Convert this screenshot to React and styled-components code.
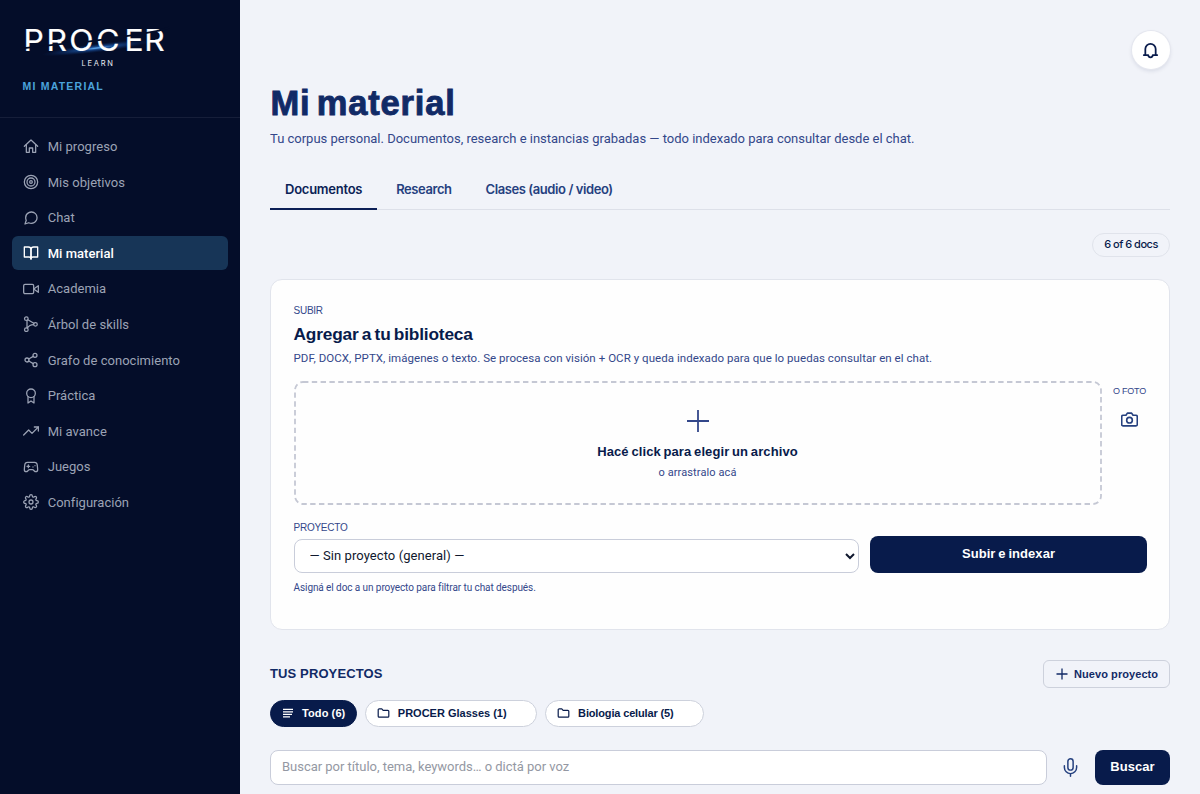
import styled, { createGlobalStyle } from "styled-components";
import { FiTarget, FiMessageCircle, FiBookOpen, FiVideo, FiShare2, FiTrendingUp, FiSettings, FiCamera } from "react-icons/fi";
import { Gamepad2, Mic } from "lucide-react";

const GlobalStyle = createGlobalStyle`
    *{
        box-sizing: border-box;
    }
    body{
        margin: 0;
        overflow: hidden;
        background-color: #f1f3f9;
        color: #081b4b;
        font-family: Roboto, "Noto Sans", sans-serif;
        font-size: 13px;
    }
    h1, h2, h3, p{
        margin: 0;
    }
    button, input, select{
        font-family: inherit;
        margin: 0;
    }
`

const heading = `"Liberation Sans", Arial, sans-serif`
const ui = `Inter, "Liberation Sans", sans-serif`

const Layout = styled.div`
    display: grid;
    grid-template-columns: 240px minmax(0, 1fr);
    height: 794px;
`

/* sidebar */
const Sidebar = styled.aside`
    background-color: #040d29;
`

const Brand = styled.div`
    display: flex;
    flex-direction: column;
    height: 118px;
    padding-top: 20px;
    border-bottom: 1px solid #161e39;
`

const Logo = styled.svg`
    display: block;
    width: 190px;
    height: 50px;
`

const Section = styled.span`
    margin: 9px 0 0 22.5px;
    color: #4ba3dc;
    font: 700 10.5px/14px ${heading};
    letter-spacing: 1.22px;
`

const Nav = styled.nav`
    display: flex;
    flex-direction: column;
    gap: 2px;
    padding: 11.7px 12px 0 11.5px;
`

const NavItem = styled.a`
    display: flex;
    align-items: center;
    gap: 8.7px;
    height: 33.6px;
    padding-left: 11.5px;
    border-radius: 6px;
    color: ${props => props.$active ? '#fff' : '#9ca3b5'};
    background-color: ${props => props.$active ? '#173557' : 'transparent'};
    font-weight: ${props => props.$active ? 500 : 400};
    letter-spacing: .03px;

    svg{
        flex: none;
        width: 16px;
        height: 16px;
        stroke-width: ${props => props.$active ? 2 : 1.9};
    }
`

/* content */
const Main = styled.main`
    display: flex;
    flex-direction: column;
    padding: 31px 30px 0;
`

const Bell = styled.button`
    display: grid;
    place-items: center;
    align-self: flex-end;
    width: 38px;
    height: 38px;
    padding: 0 1px 0 0;
    border: 0;
    border-radius: 50%;
    color: #0a1c4c;
    background-color: #fff;
    box-shadow: 0 0 0 1px #e5e7ef, 0 2px 4px rgba(10, 28, 76, .12);
`

const Title = styled.h1`
    margin-top: 15px;
    padding-left: .5px;
    color: #112a66;
    font: 700 34.5px/38px ${heading};
    letter-spacing: .8px;
    word-spacing: -4px;
    -webkit-text-stroke: .9px #112a66;
`

const Subtitle = styled.p`
    margin-top: 7px;
    color: #33478a;
    line-height: 20px;
    letter-spacing: -.01px;
`

const Tabs = styled.div`
    display: flex;
    gap: 4px;
    height: 42px;
    margin-top: 19px;
    border-bottom: 1px solid #dde0e9;
`

const Tab = styled.button`
    height: 42px;
    padding: 1px 15px 0;
    border: 0;
    border-bottom: 2px solid ${props => props.$active ? '#0c1f56' : 'transparent'};
    color: ${props => props.$active ? '#0c1f56' : '#25407f'};
    background: none;
    font: 600 13px/16px ${ui};
    letter-spacing: ${props => props.$spacing};
`

const DocCount = styled.span`
    align-self: flex-end;
    width: 78px;
    height: 24px;
    margin-top: 23px;
    border: 1px solid #e0e3eb;
    border-radius: 12px;
    font: 500 11px/21px ${ui};
    letter-spacing: -.5px;
    text-align: center;
`

const Card = styled.section`
    height: 351px;
    margin-top: 22px;
    padding: 23.5px 22px 0 22.5px;
    border: 1px solid #e1e4ec;
    border-radius: 12px;
    background-color: #fefefe;
`

const Label = styled.div`
    color: #33478a;
    font: 400 10px/14px ${heading};
    letter-spacing: -.25px;
`

const CardTitle = styled.h2`
    margin-top: 4.5px;
    color: #081b4b;
    font: 700 17.3px/24px ${heading};
    letter-spacing: -.18px;
    word-spacing: -1.3px;
`

const CardText = styled.p`
    margin-top: 3px;
    color: #33478a;
    font-size: 11.5px;
    line-height: 18px;
    letter-spacing: .05px;
`

const UploadRow = styled.div`
    display: grid;
    grid-template-columns: 808px 34px;
    gap: 11px;
    margin-top: 14px;
`

const DropZone = styled.div`
    display: flex;
    flex-direction: column;
    align-items: center;
    position: relative;
    height: 124px;
    padding-top: 28px;
    color: #33478a;
`

const DashedFrame = styled.svg`
    position: absolute;
    inset: 0;
    width: 100%;
    height: 100%;
`

const DropTitle = styled.strong`
    margin-top: 10px;
    color: #081b4b;
    font: 700 13px/18px ${heading};
    letter-spacing: .1px;
    word-spacing: -1px;
`

const DropHint = styled.span`
    margin-top: 3px;
    font-size: 11px;
    line-height: 18px;
    letter-spacing: .1px;
`

const Photo = styled.div`
    display: flex;
    flex-direction: column;
    align-items: center;
    gap: 13px;
    padding-top: 3px;
    color: #25407f;

    svg{
        stroke-width: 2.3;
    }
`

const PhotoLabel = styled(Label)`
    font-size: 9px;
    letter-spacing: -.25px;
    white-space: nowrap;
`

const ProjectRow = styled.div`
    display: grid;
    grid-template-columns: 565px 277px;
    gap: 11.5px;
    align-items: end;
    margin-top: 15.5px;
`

const Select = styled.select`
    display: block;
    width: 100%;
    height: 34.5px;
    margin-top: 4px;
    padding: 0 0 0 11px;
    border: 1px solid #c9cdda;
    border-radius: 8px;
    color: #10182e;
    background-color: #fff;
    font-size: 13px;
    letter-spacing: .07px;
`

const PrimaryButton = styled.button`
    width: ${props => props.$width};
    height: ${props => props.$height};
    padding: 0 0 1px;
    border: 0;
    border-radius: 8px;
    color: #fff;
    background-color: #081b4b;
    font: 700 13px/16px ${heading};
    letter-spacing: .05px;
    word-spacing: -.8px;
`

const Help = styled.p`
    margin-top: 8px;
    color: #33478a;
    font-size: 10px;
    line-height: 14px;
    letter-spacing: -.08px;
`

const ProjectsHead = styled.div`
    display: flex;
    align-items: center;
    justify-content: space-between;
    margin-top: 29.5px;
`

const ProjectsTitle = styled.h3`
    color: #112a66;
    font: 700 13px/20px ${heading};
    letter-spacing: .12px;
`

const NewProject = styled.button`
    display: flex;
    align-items: center;
    gap: 6px;
    width: 127px;
    height: 28.5px;
    padding: 0 0 0 12px;
    border: 1px solid #cdd1dc;
    border-radius: 6px;
    color: #112a66;
    background: none;
    font: 700 11px/14px ${heading};
    letter-spacing: .07px;
`

const Chips = styled.div`
    display: flex;
    gap: 7.8px;
    margin-top: 11.5px;
`

const Chip = styled.button`
    display: flex;
    align-items: center;
    gap: 8px;
    width: ${props => props.$width};
    height: 27.5px;
    padding: 0 0 1px 11px;
    border: 1px solid ${props => props.$active ? '#081b4b' : '#cdd1dc'};
    border-radius: 14px;
    color: ${props => props.$active ? '#fff' : '#081b4b'};
    background-color: ${props => props.$active ? '#081b4b' : '#fff'};
    font: 700 11px/14px ${heading};
    letter-spacing: ${props => props.$spacing};
    white-space: nowrap;
`

const SearchRow = styled.form`
    display: grid;
    grid-template-columns: 777px 24px 75px;
    column-gap: 12px;
    align-items: center;
    margin-top: 22.5px;
`

const SearchInput = styled.input`
    height: 35.5px;
    padding: 0 11px 2px;
    border: 1px solid #c9cdda;
    border-radius: 8px;
    background-color: #fff;
    font-size: 13px;
    letter-spacing: -.02px;

    &::placeholder{
        color: #9498a3;
        opacity: 1;
    }
`

const MicButton = styled.button`
    display: grid;
    place-items: center;
    padding: 0 1px 0 0;
    border: 0;
    color: #25407f;
    background: none;
`

const line = { fill: 'none', stroke: 'currentColor', strokeLinecap: 'round', strokeLinejoin: 'round' }

const HomeIcon = () => (
    <svg viewBox="0 0 24 24" {...line}>
        <path d="M2 12.5 12 3l10 9.5" />
        <path d="M5 10v11.5h4.5V15h5v6.5H19V10" />
    </svg>
)

const SkillsIcon = () => (
    <svg viewBox="0 0 24 24" {...line}>
        <circle cx="5" cy="4" r="2.7" />
        <circle cx="5" cy="20.5" r="2.7" />
        <circle cx="18.7" cy="12.5" r="2.7" />
        <path d="M6 6.7v11M7.4 5.5 16.2 11M15.8 12.8c-4 0-7 1.5-9.3 5.4" />
    </svg>
)

const RibbonIcon = () => (
    <svg viewBox="0 0 24 24" {...line}>
        <circle cx="12" cy="8" r="6.5" />
        <path d="M7.5 13v9.5l4.5-3 4.5 3V13" />
    </svg>
)

const BellIcon = () => (
    <svg width="17" height="17" viewBox="0 0 24 24" strokeWidth="2.5" {...line}>
        <path d="M2.5 18.5h2.2V10a7.3 7.3 0 0 1 14.6 0v8.5h2.2" />
        <path d="M4.7 18.5h4.1c0 4.2 6.4 4.2 6.4 0h4.1" />
    </svg>
)

const PlusIcon = ({ size, width }) => (
    <svg width={size} height={size} viewBox="0 0 24 24" strokeWidth={width} {...line} strokeLinecap="butt">
        <path d="M12 1v22M1 12h22" />
    </svg>
)

const ListIcon = () => (
    <svg width="12" height="12" viewBox="0 0 12 12" strokeWidth="1.2" {...line} strokeLinecap="butt">
        <path d="M1 2.3h10M1 4.8h10M1 7.3h9M1 9.8h7" />
    </svg>
)

const FolderIcon = () => (
    <svg width="13" height="12" viewBox="0 0 13 12" strokeWidth="1.2" {...line}>
        <path d="M1.2 2.8a.9.9 0 0 1 .9-.9h2.7l1.3 1.4h4.8a.9.9 0 0 1 .9.9v5.1a.9.9 0 0 1-.9.9H2.1a.9.9 0 0 1-.9-.9z" />
    </svg>
)

const menu = [
    { label: 'Mi progreso', Icon: HomeIcon },
    { label: 'Mis objetivos', Icon: FiTarget },
    { label: 'Chat', Icon: FiMessageCircle },
    { label: 'Mi material', Icon: FiBookOpen, active: true },
    { label: 'Academia', Icon: FiVideo },
    { label: 'Árbol de skills', Icon: SkillsIcon },
    { label: 'Grafo de conocimiento', Icon: FiShare2 },
    { label: 'Práctica', Icon: RibbonIcon },
    { label: 'Mi avance', Icon: FiTrendingUp },
    { label: 'Juegos', Icon: Gamepad2 },
    { label: 'Configuración', Icon: FiSettings },
]

const tabs = [
    { label: 'Documentos', spacing: '-.25px', active: true },
    { label: 'Research', spacing: '-.43px' },
    { label: 'Clases (audio / video)', spacing: '-.42px' },
]

function ProcerLogo() {
    return (
        <Logo viewBox="0 0 190 50">
            <defs>
                <radialGradient id="flare">
                    <stop offset="0" stopColor="#6bb6fa" />
                    <stop offset=".3" stopColor="#1f5fb4" stopOpacity=".7" />
                    <stop offset="1" stopColor="#0b2c66" stopOpacity="0" />
                </radialGradient>
            </defs>
            <ellipse cx="97" cy="28" rx="56" ry="4.5" fill="url(#flare)" transform="rotate(-7 97 28)" />
            <text
                y="30.7"
                x="22.1 43.8 65.4 90.8 117.4 136.2"
                transform="scale(1.06 1)"
                fill="#fff"
                stroke="#fff"
                strokeWidth=".2"
                fontFamily="Inter, sans-serif"
                fontWeight="400"
                fontSize="30"
            >
                PROCER
            </text>
            {/* slash that cuts the letters */}
            <path
                d="M22 28.4 69 23.2M88 21.6l16-2.3M123 16.6l10-1.5M144 13.4l15-2.7 10-3"
                fill="none"
                stroke="#040d29"
                strokeWidth="1.8"
            />
            <text x="81.5" y="46" fill="#e6eaf2" fontFamily="Inter, sans-serif" fontSize="7.5" letterSpacing="1.75">LEARN</text>
        </Logo>
    );
}

function App() {
    return (
        <Layout>
            <GlobalStyle />
            <Sidebar>
                <Brand>
                    <ProcerLogo />
                    <Section>MI MATERIAL</Section>
                </Brand>
                <Nav>
                    {menu.map(({ label, Icon, active }) => (
                        <NavItem key={label} $active={active}>
                            <Icon />
                            {label}
                        </NavItem>
                    ))}
                </Nav>
            </Sidebar>
            <Main>
                <Bell aria-label="Notificaciones"><BellIcon /></Bell>
                <Title>Mi material</Title>
                <Subtitle>Tu corpus personal. Documentos, research e instancias grabadas — todo indexado para consultar desde el chat.</Subtitle>
                <Tabs>
                    {tabs.map(tab => (
                        <Tab key={tab.label} $active={tab.active} $spacing={tab.spacing}>{tab.label}</Tab>
                    ))}
                </Tabs>
                <DocCount>6 of 6 docs</DocCount>

                <Card>
                    <Label>SUBIR</Label>
                    <CardTitle>Agregar a tu biblioteca</CardTitle>
                    <CardText>PDF, DOCX, PPTX, imágenes o texto. Se procesa con visión + OCR y queda indexado para que lo puedas consultar en el chat.</CardText>
                    <UploadRow>
                        <DropZone>
                            <DashedFrame>
                                <rect x="1" y="1" width="806" height="122" rx="8" fill="none" stroke="#c5c8d4" strokeWidth="1.8" strokeDasharray="5.4 3.4" />
                            </DashedFrame>
                            <PlusIcon size={24} width={1.8} />
                            <DropTitle>Hacé click para elegir un archivo</DropTitle>
                            <DropHint>o arrastralo acá</DropHint>
                        </DropZone>
                        <Photo>
                            <PhotoLabel>O FOTO</PhotoLabel>
                            <FiCamera size={17} />
                        </Photo>
                    </UploadRow>
                    <ProjectRow>
                        <div>
                            <Label>PROYECTO</Label>
                            <Select defaultValue="">
                                <option value="">— Sin proyecto (general) —</option>
                            </Select>
                        </div>
                        <PrimaryButton $width="277px" $height="37.5px">Subir e indexar</PrimaryButton>
                    </ProjectRow>
                    <Help>Asigná el doc a un proyecto para filtrar tu chat después.</Help>
                </Card>

                <ProjectsHead>
                    <ProjectsTitle>TUS PROYECTOS</ProjectsTitle>
                    <NewProject><PlusIcon size={12} width={2.6} />Nuevo proyecto</NewProject>
                </ProjectsHead>
                <Chips>
                    <Chip $active $width="87px" $spacing=".1px"><ListIcon />Todo (6)</Chip>
                    <Chip $width="172.5px" $spacing="0"><FolderIcon />PROCER Glasses (1)</Chip>
                    <Chip $width="158.5px" $spacing="-.15px"><FolderIcon />Biologia celular (5)</Chip>
                </Chips>
                <SearchRow>
                    <SearchInput placeholder="Buscar por título, tema, keywords… o dictá por voz" />
                    <MicButton type="button" aria-label="Dictar"><Mic size={21} strokeWidth={1.7} /></MicButton>
                    <PrimaryButton type="button" $width="75px" $height="35.5px">Buscar</PrimaryButton>
                </SearchRow>
            </Main>
        </Layout>
    );
}

export default App;
